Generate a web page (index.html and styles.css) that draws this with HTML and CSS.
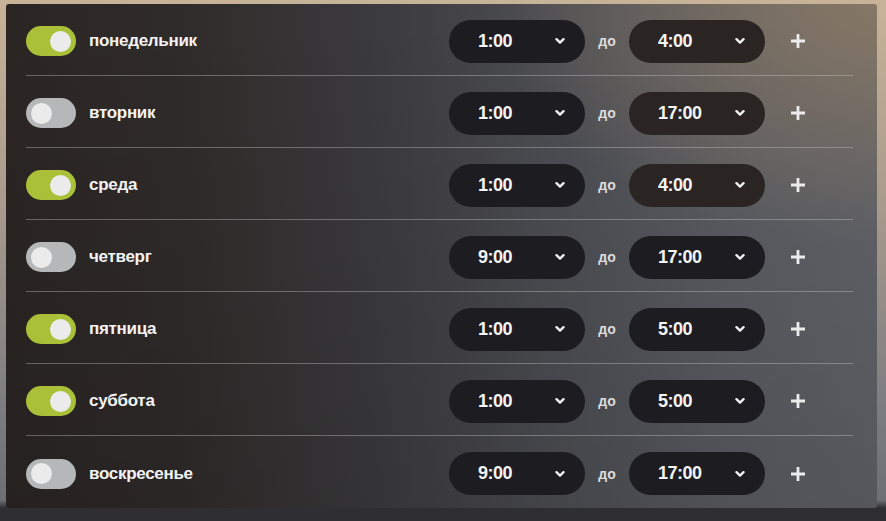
FILE: index.html
```html
<!DOCTYPE html>
<html lang="ru">
<head>
<meta charset="utf-8">
<link rel="stylesheet" href="styles.css">
</head>
<body>
<div class="panel">
  <div class="row">
    <span class="toggle on"><span class="knob"></span></span>
    <span class="day">понедельник</span>
    <span class="select"><span class="time">1:00</span><svg class="chev" viewBox="0 0 10 6"><path d="M1.5 1.2 L5 4.6 L8.5 1.2"/></svg></span>
    <span class="to">до</span>
    <span class="select warm"><span class="time">4:00</span><svg class="chev" viewBox="0 0 10 6"><path d="M1.5 1.2 L5 4.6 L8.5 1.2"/></svg></span>
    <svg class="plus" viewBox="0 0 16 16"><path d="M8 1 V15 M1 8 H15"/></svg>
  </div>
  <div class="row">
    <span class="toggle"><span class="knob"></span></span>
    <span class="day">вторник</span>
    <span class="select"><span class="time">1:00</span><svg class="chev" viewBox="0 0 10 6"><path d="M1.5 1.2 L5 4.6 L8.5 1.2"/></svg></span>
    <span class="to">до</span>
    <span class="select warm"><span class="time">17:00</span><svg class="chev" viewBox="0 0 10 6"><path d="M1.5 1.2 L5 4.6 L8.5 1.2"/></svg></span>
    <svg class="plus" viewBox="0 0 16 16"><path d="M8 1 V15 M1 8 H15"/></svg>
  </div>
  <div class="row">
    <span class="toggle on"><span class="knob"></span></span>
    <span class="day">среда</span>
    <span class="select"><span class="time">1:00</span><svg class="chev" viewBox="0 0 10 6"><path d="M1.5 1.2 L5 4.6 L8.5 1.2"/></svg></span>
    <span class="to">до</span>
    <span class="select warm"><span class="time">4:00</span><svg class="chev" viewBox="0 0 10 6"><path d="M1.5 1.2 L5 4.6 L8.5 1.2"/></svg></span>
    <svg class="plus" viewBox="0 0 16 16"><path d="M8 1 V15 M1 8 H15"/></svg>
  </div>
  <div class="row">
    <span class="toggle"><span class="knob"></span></span>
    <span class="day">четверг</span>
    <span class="select"><span class="time">9:00</span><svg class="chev" viewBox="0 0 10 6"><path d="M1.5 1.2 L5 4.6 L8.5 1.2"/></svg></span>
    <span class="to">до</span>
    <span class="select"><span class="time">17:00</span><svg class="chev" viewBox="0 0 10 6"><path d="M1.5 1.2 L5 4.6 L8.5 1.2"/></svg></span>
    <svg class="plus" viewBox="0 0 16 16"><path d="M8 1 V15 M1 8 H15"/></svg>
  </div>
  <div class="row">
    <span class="toggle on"><span class="knob"></span></span>
    <span class="day">пятница</span>
    <span class="select"><span class="time">1:00</span><svg class="chev" viewBox="0 0 10 6"><path d="M1.5 1.2 L5 4.6 L8.5 1.2"/></svg></span>
    <span class="to">до</span>
    <span class="select"><span class="time">5:00</span><svg class="chev" viewBox="0 0 10 6"><path d="M1.5 1.2 L5 4.6 L8.5 1.2"/></svg></span>
    <svg class="plus" viewBox="0 0 16 16"><path d="M8 1 V15 M1 8 H15"/></svg>
  </div>
  <div class="row">
    <span class="toggle on"><span class="knob"></span></span>
    <span class="day">суббота</span>
    <span class="select"><span class="time">1:00</span><svg class="chev" viewBox="0 0 10 6"><path d="M1.5 1.2 L5 4.6 L8.5 1.2"/></svg></span>
    <span class="to">до</span>
    <span class="select"><span class="time">5:00</span><svg class="chev" viewBox="0 0 10 6"><path d="M1.5 1.2 L5 4.6 L8.5 1.2"/></svg></span>
    <svg class="plus" viewBox="0 0 16 16"><path d="M8 1 V15 M1 8 H15"/></svg>
  </div>
  <div class="row">
    <span class="toggle"><span class="knob"></span></span>
    <span class="day">воскресенье</span>
    <span class="select"><span class="time">9:00</span><svg class="chev" viewBox="0 0 10 6"><path d="M1.5 1.2 L5 4.6 L8.5 1.2"/></svg></span>
    <span class="to">до</span>
    <span class="select"><span class="time">17:00</span><svg class="chev" viewBox="0 0 10 6"><path d="M1.5 1.2 L5 4.6 L8.5 1.2"/></svg></span>
    <svg class="plus" viewBox="0 0 16 16"><path d="M8 1 V15 M1 8 H15"/></svg>
  </div>
</div>
</body>
</html>
```

FILE: styles.css
```css
html, body {
  margin: 0;
  height: 100%;
}
body {
  width: 886px;
  height: 521px;
  overflow: hidden;
  font-family: "Liberation Sans", Arial, sans-serif;
  background:
    linear-gradient(to bottom, rgba(0,0,0,0) 0%, rgba(0,0,0,0) 96%, rgba(40,40,42,0.9) 97.5%),
    linear-gradient(to bottom, #c7b398 0%, #a89a8c 40%, #7a7b80 80%, #6a6c72 100%);
  padding: 4px 9px 13px 6px;
  box-sizing: border-box;
}
.panel {
  height: 100%;
  border-radius: 3px;
  padding: 0 24px 0 20px;
  box-sizing: border-box;
  background:
    radial-gradient(ellipse 380px 240px at 100% 0%, rgba(150,128,100,0.7), rgba(150,128,100,0) 100%),
    linear-gradient(to bottom, rgba(0,0,0,0) 0%, rgba(0,0,0,0.12) 100%),
    linear-gradient(to right, #2b2624 0%, #2f2b2a 20%, #3b3a3d 42%, #4c4d52 62%, #5a5c62 82%, #616369 100%);
  display: flex;
  flex-direction: column;
}
.row {
  height: 72px;
  box-sizing: border-box;
  padding-top: 3px;
  display: flex;
  align-items: center;
  border-bottom: 1px solid rgba(205, 205, 205, 0.38);
}
.row:last-child {
  border-bottom: none;
}
.toggle {
  width: 50px;
  height: 30px;
  border-radius: 15px;
  background: #b6b7b8;
  display: flex;
  align-items: center;
  padding: 0 5px;
  box-sizing: border-box;
  flex: none;
}
.toggle.on {
  background: #a9c038;
  justify-content: flex-end;
}
.knob {
  width: 21px;
  height: 21px;
  border-radius: 50%;
  background: #ecebeb;
}
.day {
  flex: 1;
  margin-left: 13px;
  color: #f3f3f3;
  font-weight: 700;
  font-size: 17px;
  letter-spacing: -0.3px;
}
.select {
  width: 136px;
  height: 43px;
  border-radius: 22px;
  background: #1d1c21;
  display: flex;
  align-items: center;
  padding: 0 20px 0 29px;
  box-sizing: border-box;
  flex: none;
}
.select.warm {
  background: #2a2522;
}
.time {
  flex: 1;
  color: #f4f4f4;
  font-weight: 700;
  font-size: 18px;
  letter-spacing: -0.5px;
}
.chev {
  width: 10px;
  height: 6px;
  fill: none;
  stroke: #eeeeee;
  stroke-width: 2.4;
  stroke-linecap: round;
  stroke-linejoin: round;
}
.to {
  width: 44px;
  text-align: center;
  color: #dddddd;
  font-weight: 700;
  font-size: 14px;
  flex: none;
}
.plus {
  width: 16px;
  height: 16px;
  margin-left: 25px;
  margin-right: 47px;
  fill: none;
  stroke: #ececec;
  stroke-width: 2.8;
  flex: none;
}
```
